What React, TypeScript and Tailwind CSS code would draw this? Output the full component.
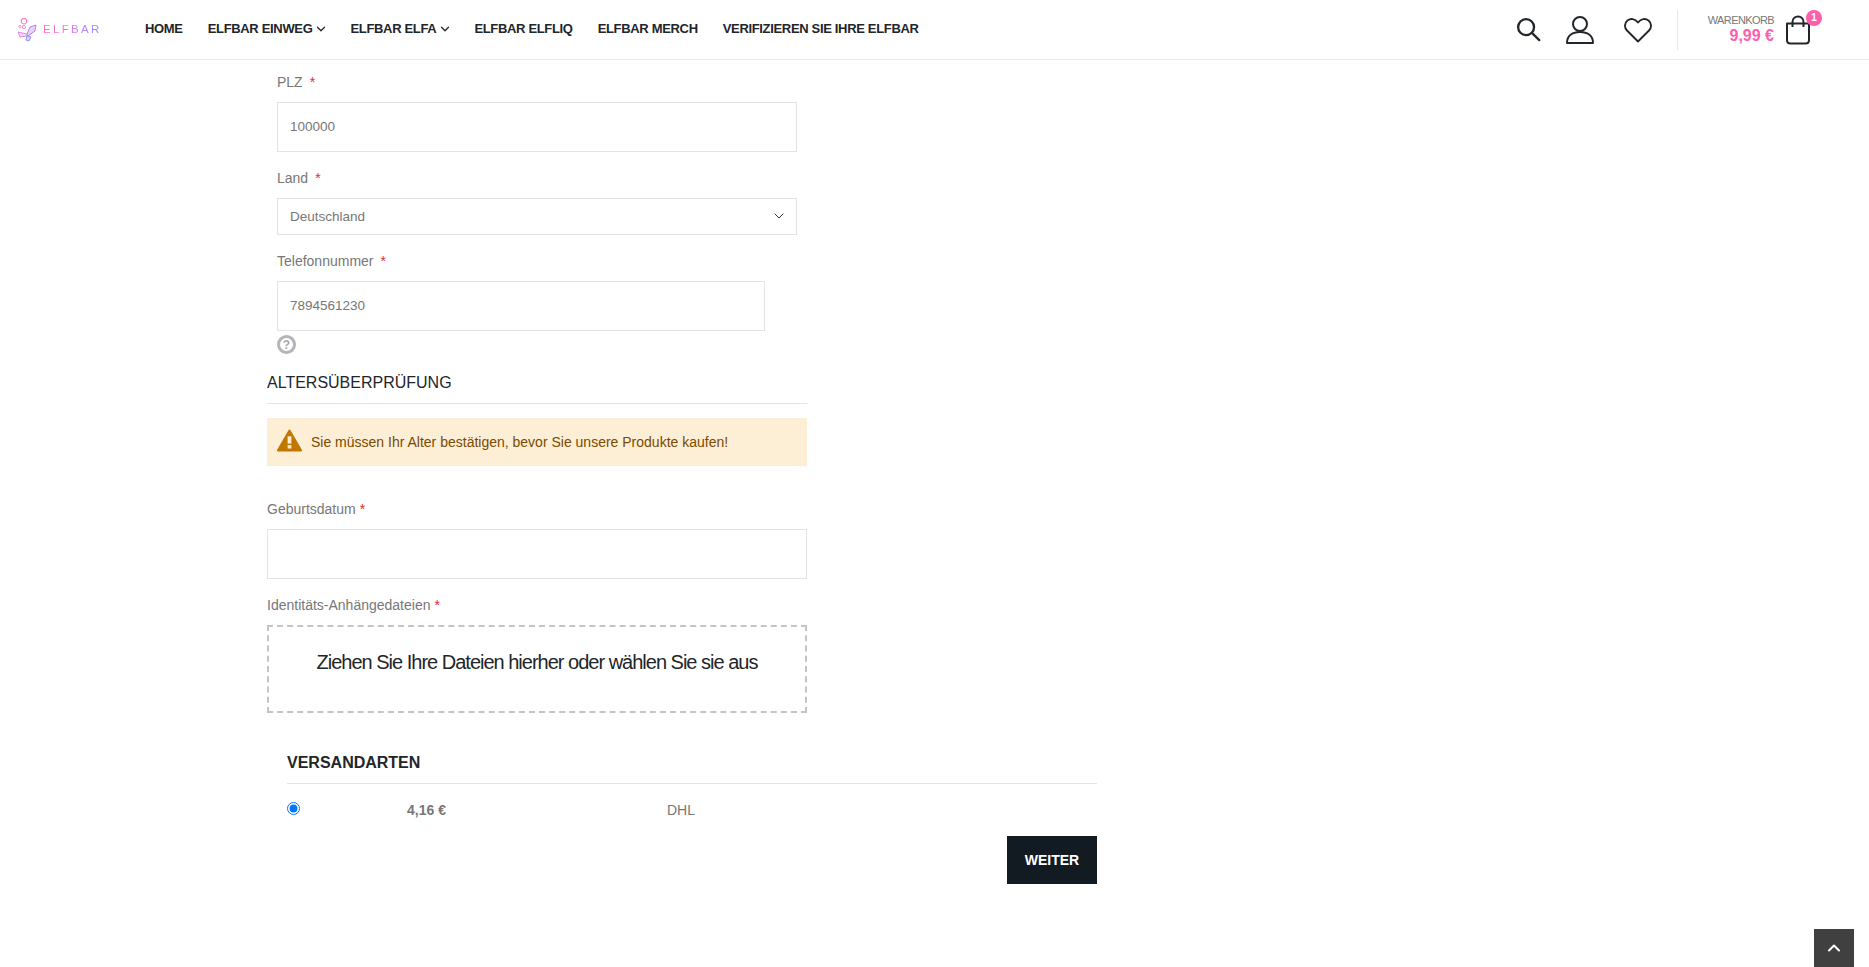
import { ChevronDown, ChevronUp } from "lucide-react";
import type { ReactNode } from "react";

const navItems = [
  { label: "HOME" },
  { label: "ELFBAR EINWEG", caret: true },
  { label: "ELFBAR ELFA", caret: true },
  { label: "ELFBAR ELFLIQ" },
  { label: "ELFBAR MERCH" },
  { label: "VERIFIZIEREN SIE IHRE ELFBAR" },
];

function Logo() {
  return (
    <a className="flex h-[30px] w-[82px] items-center" href="#">
      <svg className="ml-px shrink-0" width="20" height="24" viewBox="0 0 20 24" fill="none" strokeWidth="0.9">
        <circle cx="7" cy="3.2" r="2.8" stroke="#fb7fc8" strokeWidth="1.2" />
        <circle cx="3" cy="8.6" r="1.2" stroke="#f583cf" />
        <circle cx="7" cy="9" r="1.6" stroke="#f583cf" />
        <path d="M10 16 L13 9 L19 7 L18 13 L11 18Z" stroke="#b279f2" fill="#e6d2fb" />
        <path d="M10 16 L1 14 L3 19 L10 18Z" stroke="#e07fe6" fill="#f8d8f5" />
        <path d="M10 18 L14 19 L12 23 L9 22Z" stroke="#8b8af0" fill="#d9d9fb" />
      </svg>
      <span className="ml-[6px] bg-gradient-to-r from-[#ff72b8] via-[#d57cf0] to-[#8590f6] bg-clip-text text-[11.5px] leading-none tracking-[2.3px] whitespace-nowrap text-transparent">
        ELFBAR
      </span>
    </a>
  );
}

function HeaderIcons() {
  return (
    <div className="flex items-center">
      <svg className="mr-[24px]" width="25" height="25" viewBox="0 0 26 26" fill="none" stroke="#222529" strokeWidth="2.4" strokeLinecap="round">
        <circle cx="10.5" cy="10.5" r="8.3" />
        <path d="M16.8 16.8 L24.2 24" />
      </svg>
      <svg className="mr-[29px]" width="30" height="30" viewBox="0 0 30 30" fill="none" stroke="#222529" strokeWidth="2">
        <circle cx="15" cy="9" r="7" />
        <path d="M2 28 C2 20 8 17 15 17 C22 17 28 20 28 28 Z" strokeLinejoin="round" />
      </svg>
      <svg className="mr-[25px]" width="28" height="26" viewBox="0 0 28 26" fill="none" stroke="#222529" strokeWidth="1.9" strokeLinejoin="round">
        <path d="M14 24.5 L3 13.5 C0 10.5 0.5 6 3.5 3.5 C6.5 1 11 1.5 14 5.5 C17 1.5 21.5 1 24.5 3.5 C27.5 6 28 10.5 25 13.5 Z" />
      </svg>
      <div className="h-[40px] w-px bg-[#e7e7e7]" />
    </div>
  );
}

function Cart() {
  return (
    <div className="ml-[30px] flex items-center">
      <div className="flex flex-col items-end">
        <span className="text-[11px] leading-[13px] tracking-[-0.6px] text-[#777777]">WARENKORB</span>
        <span className="text-[16px] font-bold leading-[18px] text-[#ff5eae]">9,99 €</span>
      </div>
      <div className="relative ml-[11px] h-[30px] w-[26px]">
        <svg width="26" height="30" viewBox="0 0 26 30" fill="none" stroke="#222529" strokeWidth="2">
          <path d="M2 8.5 H24 V25 C24 27.5 22.5 28.5 20.5 28.5 H5.5 C3.5 28.5 2 27.5 2 25 Z" strokeLinejoin="round" />
          <path d="M7.5 12 V7 C7.5 3.5 10 1.5 13 1.5 C16 1.5 18.5 3.5 18.5 7 V12" />
        </svg>
        <span className="absolute -top-[5px] -right-[11px] flex h-[16px] w-[16px] items-center justify-center rounded-full bg-[#ff5eae] text-[10px] font-bold leading-none text-white">
          1
        </span>
      </div>
    </div>
  );
}

function Header() {
  return (
    <header className="flex h-[60px] items-center border-b border-[#ebebeb] bg-white pr-[58px] pl-[16px]">
      <Logo />
      <nav className="mb-[2px] ml-[47px] flex items-center gap-[25px]">
        {navItems.map((item) => (
          <a key={item.label} href="#" className="flex items-center text-[13px] font-bold tracking-[-0.33px] whitespace-nowrap text-[#222529]">
            {item.label}
            {item.caret && <ChevronDown className="mt-px -mr-[3px] ml-[2px]" size={14} strokeWidth={2.2} />}
          </a>
        ))}
      </nav>
      <div className="ml-auto flex items-center">
        <HeaderIcons />
        <Cart />
      </div>
    </header>
  );
}

function Label({ children, gap = "ml-[7px]" }: { children: ReactNode; gap?: string }) {
  return (
    <label className="block text-[14px] leading-[20px] text-[#777777]">
      {children}
      <span className={`${gap} text-[#e4272c]`}>*</span>
    </label>
  );
}

function AddressFields() {
  return (
    <div className="ml-[10px] w-[520px]">
      <div className="pt-[12px]">
        <Label>PLZ</Label>
        <input
          className="mt-[10px] block h-[50px] w-full border border-[#e3e3e3] px-[12px] pb-[2px] text-[13.5px] text-[#777777] outline-none"
          defaultValue="100000"
        />
      </div>
      <div className="mt-[16px]">
        <Label>Land</Label>
        <div className="relative mt-[10px]">
          <select className="block h-[37px] w-full appearance-none border border-[#e3e3e3] bg-white px-[12px] pt-px text-[13.5px] text-[#777777] outline-none">
            <option>Deutschland</option>
          </select>
          <ChevronDown className="absolute top-[10px] right-[10px] text-[#333333]" size={16} strokeWidth={1.5} />
        </div>
      </div>
      <div className="mt-[16px]">
        <Label>Telefonnummer</Label>
        <input
          className="mt-[10px] block h-[50px] w-[488px] border border-[#e3e3e3] px-[12px] pb-[2px] text-[13.5px] text-[#777777] outline-none"
          defaultValue="7894561230"
        />
        <div className="mt-[4px] flex h-[19px] w-[19px] items-center justify-center rounded-full border-[3px] border-[#b5b5b5] text-[12px] font-black leading-none text-[#a8a8a8]">
          ?
        </div>
      </div>
    </div>
  );
}

function AgeCheck() {
  return (
    <section className="w-[540px]">
      <h3 className="mt-[18px] border-b border-[#e3e3e3] pb-[9px] text-[16px] leading-[22px] text-[#222529]">ALTERSÜBERPRÜFUNG</h3>
      <div className="mt-[14px] flex h-[48px] items-center bg-[#fdefd6] px-[10px] text-[14px] text-[#7a4a00]">
        <svg width="25" height="23" viewBox="0 0 24 22" className="mr-[9px] mb-[4px] shrink-0">
          <path d="M12 1.5 L23 20.5 H1 Z" fill="#c27700" stroke="#c27700" strokeWidth="2" strokeLinejoin="round" />
          <rect x="10.2" y="7" width="3.6" height="7" fill="#fdefd6" />
          <rect x="10.2" y="15.5" width="3.6" height="3.2" fill="#fdefd6" />
        </svg>
        Sie müssen Ihr Alter bestätigen, bevor Sie unsere Produkte kaufen!
      </div>
      <div className="mt-[33px]">
        <Label gap="ml-[4px]">Geburtsdatum</Label>
        <input className="mt-[10px] block h-[50px] w-full border border-[#e3e3e3] outline-none" />
      </div>
      <div className="mt-[16px]">
        <Label gap="ml-[4px]">Identitäts-Anhängedateien</Label>
        <div className="mt-[10px] flex h-[88px] items-center justify-center border-2 border-dashed border-[#c4c4c4] pb-[15px] text-[20px] tracking-[-1px] text-[#222529]">
          Ziehen Sie Ihre Dateien hierher oder wählen Sie sie aus
        </div>
      </div>
    </section>
  );
}

function Shipping() {
  return (
    <section className="mt-[39px] ml-[20px] w-[810px]">
      <h3 className="border-b border-[#e3e3e3] pb-[9px] text-[16px] font-bold leading-[22px] text-[#222529]">VERSANDARTEN</h3>
      <div className="flex h-[52px] items-center text-[14px] text-[#777777]">
        <div className="w-[120px]">
          <input type="radio" name="shipping" defaultChecked className="m-0 mb-[4px] block" />
        </div>
        <div className="w-[260px] font-bold">4,16 €</div>
        <div>DHL</div>
      </div>
      <div className="flex justify-end">
        <button className="h-[48px] w-[90px] bg-[#121a22] text-[14px] font-bold text-white">WEITER</button>
      </div>
    </section>
  );
}

export default function App() {
  return (
    <div className="min-h-[967px] bg-white font-['Liberation_Sans',sans-serif]">
      <Header />
      <main className="pl-[267px]">
        <AddressFields />
        <AgeCheck />
        <Shipping />
      </main>
      <button className="fixed right-[15px] bottom-0 flex h-[38px] w-[40px] items-center justify-center bg-[#404040] text-white">
        <ChevronUp size={20} strokeWidth={2.4} />
      </button>
    </div>
  );
}
